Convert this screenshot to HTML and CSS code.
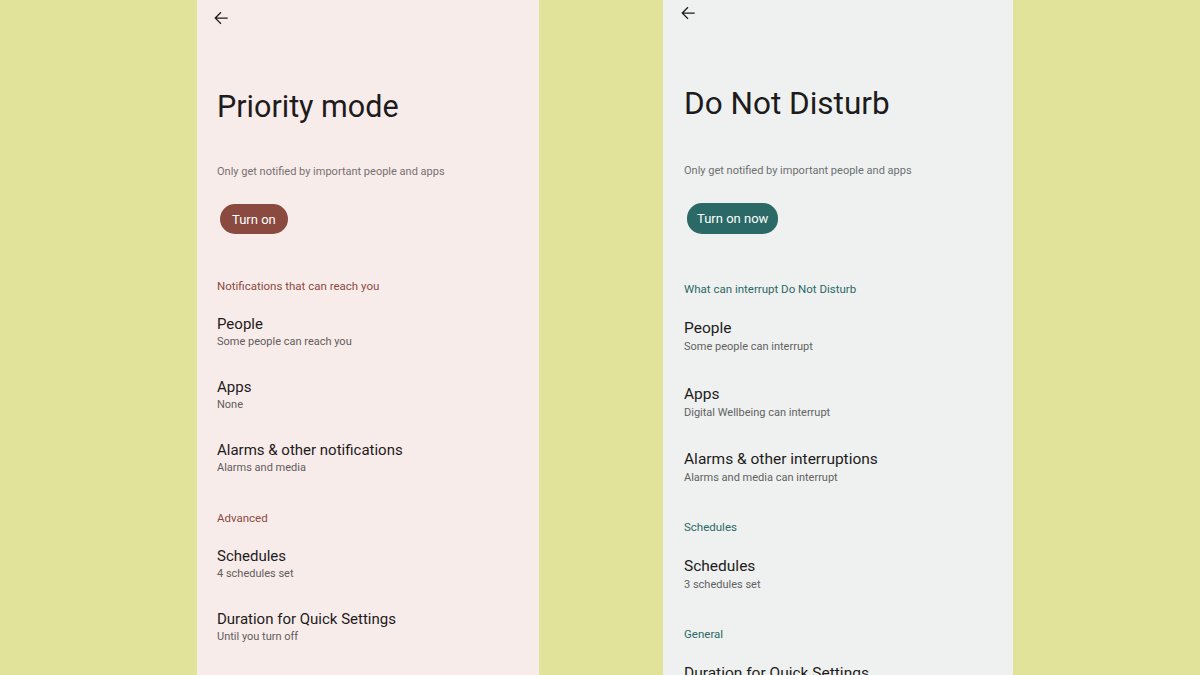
FILE: index.html
```html
<!DOCTYPE html>
<html>
<head>
<meta charset="utf-8">
<link rel="stylesheet" href="styles.css">
</head>
<body>
<div class="stage">
  <section class="panel panel-left">
    <div class="topbar">
      <svg class="back" viewBox="0 0 24 24" width="20" height="20"><path d="M20 11.25H6.9l5.6-5.6-1.06-1.06L4 12l7.44 7.41 1.06-1.06-5.6-5.6H20z" fill="#1f1b1a"/></svg>
    </div>
    <h1 class="title">Priority mode</h1>
    <p class="desc">Only get notified by important people and apps</p>
    <div class="btn-row"><span class="btn">Turn on</span></div>
    <h2 class="section first">Notifications that can reach you</h2>
    <div class="item"><div class="item-title">People</div><div class="item-sub">Some people can reach you</div></div>
    <div class="item"><div class="item-title">Apps</div><div class="item-sub">None</div></div>
    <div class="item"><div class="item-title">Alarms &amp; other notifications</div><div class="item-sub">Alarms and media</div></div>
    <h2 class="section">Advanced</h2>
    <div class="item"><div class="item-title">Schedules</div><div class="item-sub">4 schedules set</div></div>
    <div class="item"><div class="item-title">Duration for Quick Settings</div><div class="item-sub">Until you turn off</div></div>
  </section>
  <section class="panel panel-right">
    <div class="topbar">
      <svg class="back" viewBox="0 0 24 24" width="20" height="20"><path d="M20 11.25H6.9l5.6-5.6-1.06-1.06L4 12l7.44 7.41 1.06-1.06-5.6-5.6H20z" fill="#1a1c1c"/></svg>
    </div>
    <h1 class="title">Do Not Disturb</h1>
    <p class="desc">Only get notified by important people and apps</p>
    <div class="btn-row"><span class="btn">Turn on now</span></div>
    <h2 class="section first">What can interrupt Do Not Disturb</h2>
    <div class="item"><div class="item-title">People</div><div class="item-sub">Some people can interrupt</div></div>
    <div class="item"><div class="item-title">Apps</div><div class="item-sub">Digital Wellbeing can interrupt</div></div>
    <div class="item"><div class="item-title">Alarms &amp; other interruptions</div><div class="item-sub">Alarms and media can interrupt</div></div>
    <h2 class="section">Schedules</h2>
    <div class="item"><div class="item-title">Schedules</div><div class="item-sub">3 schedules set</div></div>
    <h2 class="section">General</h2>
    <div class="item"><div class="item-title">Duration for Quick Settings</div><div class="item-sub">Until you turn off</div></div>
  </section>
</div>
</body>
</html>
```
FILE: styles.css
```css
* { box-sizing: border-box; margin: 0; padding: 0; }
html, body { width: 1200px; height: 675px; overflow: hidden; }
body {
  background: #e1e39b;
  font-family: Roboto, "Noto Sans", sans-serif;
  color: #1d1b1b;
}
.stage {
  display: flex;
  height: 675px;
  padding-left: 197px;
  gap: 124px;
}
.panel {
  height: 675px;
  overflow: hidden;
  flex-shrink: 0;
}
.panel-left {
  width: 342px;
  background: #f8eceb;
  padding-left: 20px;
}
.panel-right {
  width: 350px;
  background: #eff1f0;
  padding-left: 21px;
}
.topbar { height: 36px; display: flex; align-items: center; margin-left: -6px; }
.panel-right .topbar { height: 26px; }
.back { display: block; }
.title {
  font-weight: 400;
  font-size: 30.5px;
  line-height: 36px;
  letter-spacing: 0;
}
.panel-left .title { margin-top: 53px; }
.panel-right .title { margin-top: 60px; font-size: 31.5px; }
.desc {
  font-size: 11px;
  color: #76706f;
  margin-top: 39px;
  line-height: 16px;
}
.panel-right .desc { color: #6c7070; margin-top: 41px; }
.btn-row { margin-top: 24px; display: flex; }
.btn {
  display: inline-flex;
  align-items: center;
  height: 30px;
  padding: 0 12px;
  border-radius: 15px;
  color: #fff;
  font-size: 13px;
  margin-left: 3px;
}
.panel-left .btn { background: #8a4a3f; }
.panel-right .btn { background: #2a6966; height: 31px; padding: 0 10px; margin-left: 3px; }
.section {
  font-size: 11.5px;
  font-weight: 400;
  line-height: 16px;
}
.panel-left .section { color: #8a4a3f; margin-top: 33px; }
.panel-left .section.first { margin-top: 44px; }
.panel-left .section + .item { margin-top: 21px; }
.panel-right .section { color: #2a6966; margin-top: 32px; }
.panel-right .section.first { margin-top: 47px; }
.panel-right .section + .item { margin-top: 22px; }
.item-title { font-size: 15px; line-height: 18px; }
.item-sub { font-size: 11px; line-height: 18px; color: #625c5b; }
.panel-right .item-sub { color: #5f6262; }
.panel-right .item-title { font-size: 15.5px; line-height: 19px; }
.panel-left .item + .item { margin-top: 27px; }
.panel-right .item + .item { margin-top: 28.5px; }
```
